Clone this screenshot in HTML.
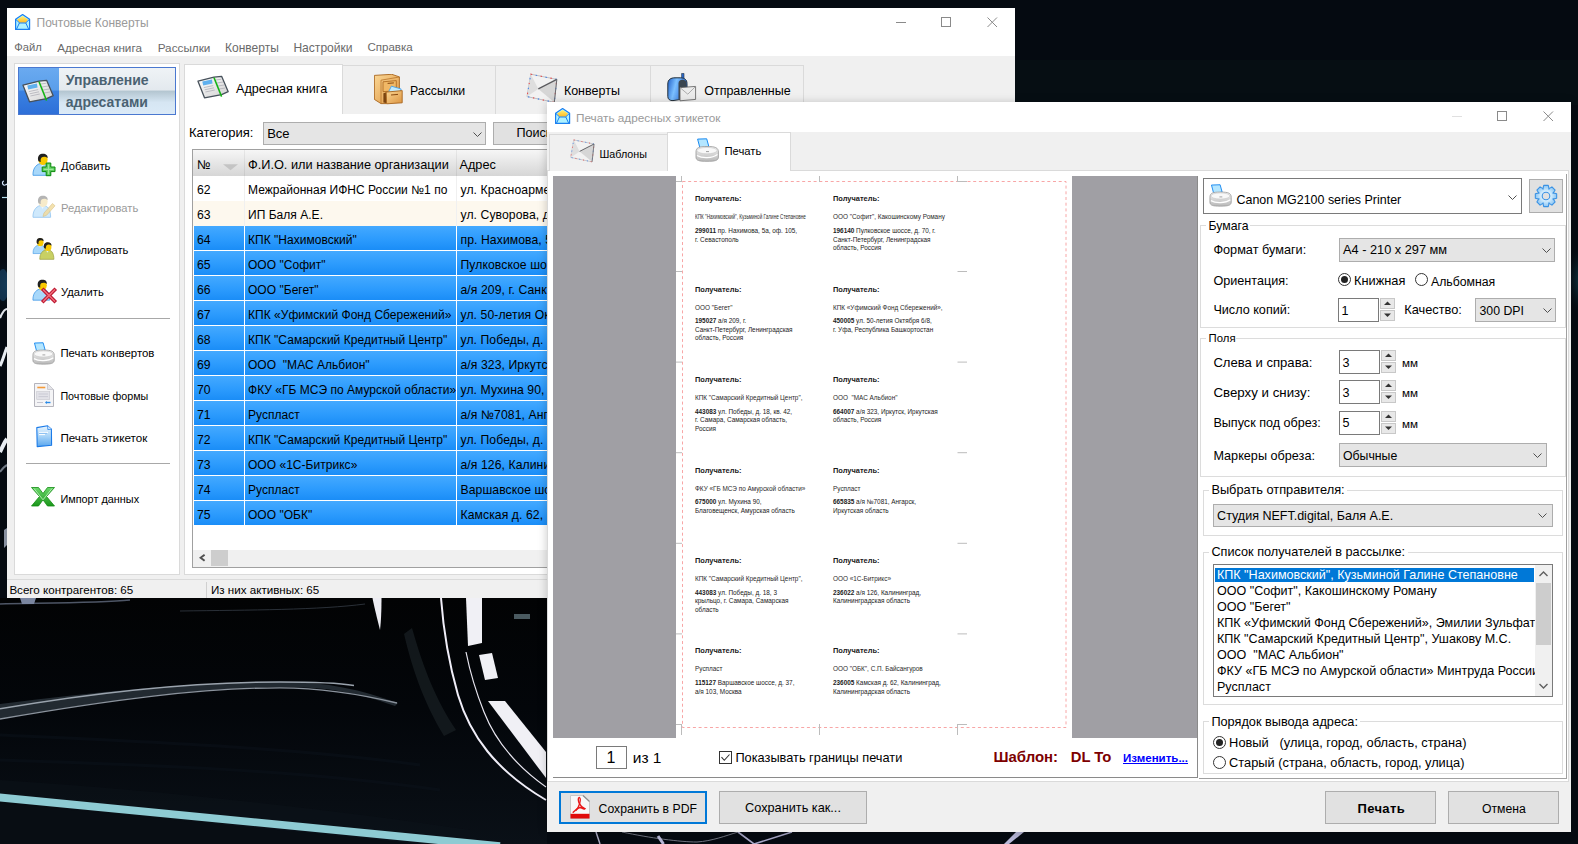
<!DOCTYPE html>
<html><head><meta charset="utf-8">
<style>
*{margin:0;padding:0;box-sizing:border-box}
html,body{width:1578px;height:844px;overflow:hidden}
body{background:#04090f;font-family:"Liberation Sans",sans-serif;font-size:12px;color:#000;position:relative}
.a{position:absolute}
.t{position:absolute;white-space:pre;line-height:1}
.clip{position:absolute;overflow:hidden}
</style></head><body>

<svg class="a" style="left:0;top:0" width="1578" height="844">
<defs>
<radialGradient id="glow" cx="0.5" cy="0.5" r="0.5"><stop offset="0" stop-color="#1a6a80"/><stop offset="1" stop-color="#04090f" stop-opacity="0"/></radialGradient>
<radialGradient id="glow2" cx="0.5" cy="0.5" r="0.5"><stop offset="0" stop-color="#0c2a3a"/><stop offset="1" stop-color="#04090f" stop-opacity="0"/></radialGradient>
</defs>
<defs><linearGradient id="floor" x1="0" y1="0" x2="0" y2="1"><stop offset="0" stop-color="#020304"/><stop offset="0.45" stop-color="#03060a"/><stop offset="1" stop-color="#0a1017"/></linearGradient></defs><rect width="1578" height="844" fill="#050a11"/><rect x="1015" y="60" width="563" height="45" fill="#061016" opacity="0.6"/><rect x="0" y="598" width="547" height="246" fill="url(#floor)"/>

<ellipse cx="1590" cy="280" rx="28" ry="40" fill="url(#glow)"/>
<ellipse cx="8" cy="285" rx="20" ry="30" fill="url(#glow2)"/>
<g stroke="#0b121b" stroke-width="3" fill="none" opacity="0.5">
<path d="M0 760 C150 765 300 770 440 790"/>
<path d="M0 735 C150 742 300 748 420 765"/>
<path d="M60 820 C200 822 330 830 420 844"/>
</g>
<path d="M0 704 C110 690 200 682 280 682 C320 682 350 686 398 703 L395 706 C350 690 320 687 280 687 C200 688 110 700 0 719 Z" fill="#222a31"/>
<path d="M0 708.8 C110 690 200 682 280 682 C320 682 345 684 354 685.5" stroke="#9aa3ad" stroke-width="1.6" fill="none"/>
<path d="M0 719 C110 700 200 688 280 687.8 C320 688 360 694 397 703" stroke="#8a929c" stroke-width="1.3" fill="none"/>
<path d="M0 780 C150 790 300 805 470 830 L470 844 L0 797 Z" fill="#0d141b" opacity="0.45"/><path d="M0 803 L470 849 L470 844 L0 844 Z" fill="#080d13"/><path d="M-2 797.3 L500 846.1" stroke="#8ecbd3" stroke-width="7.8"/>
<path d="M0 604 C40 603 100 603 130 600" stroke="#4e5666" stroke-width="1.5" fill="none"/>
<path d="M20 598 L36 598 L34 604 L22 604 Z" fill="#7a86a0"/>
<path d="M180 611 C250 610 320 610 365 604" stroke="#2a3038" stroke-width="1" fill="none"/>
<path d="M372.5 598 L381.5 598 C381.5 610 381 622 380 630 C377 618 374 606 372.5 598 Z" fill="#ececf2"/>
<path d="M441 598 C443 625 448 660 458 695 C470 735 495 770 546 800" stroke="#f0eef8" stroke-width="2" fill="none"/>
<path d="M466 652 C470 672 476 692 484 712 C495 740 515 765 546 787" stroke="#e8e6f0" stroke-width="1.2" fill="none"/>
<path d="M412 628 C424 670 436 700 456 730 L444 736 C426 706 414 676 404 634 Z" fill="#161d21" opacity="0.8"/>
<path d="M466 598 L482 598 L482 643 L468 646 Z" fill="#f0f0f5"/>
<path d="M479 655 L492 653 L498 678 L485 680 Z" fill="#f0f0f5"/>
<path d="M488 701 L505 701 L546 752 L546 778 Z" fill="#f0f0f5"/>
<path d="M514 614 H530 V619 H514 Z" fill="#4a5a60"/>
<path d="M596 832 L600 844" stroke="#a8a8c0" stroke-width="1.5" fill="none"/>
<path d="M622 832 C650 838 680 842 697 842 C712 841 725 836 738 832" stroke="#707480" stroke-width="1" fill="none"/>
<path d="M658 836 L663.5 844" stroke="#b8b8d8" stroke-width="3" fill="none"/>
<path d="M738 832 L754 844 L792 832" stroke="#a8a8c8" stroke-width="1.6" fill="none"/>
<path d="M1016 832 L1024 832 L1009 844 L1004 844 Z" fill="#b8b8d8"/>
<path d="M2 197.5 H7" stroke="#b8e0f0" stroke-width="1.2"/>
<path d="M4 181 C2.5 181 2 183 3 184.5 C4 185.5 6 185 7 184" stroke="#d8e8ff" stroke-width="1.2" fill="none"/>
<ellipse cx="3" cy="285" rx="6" ry="16" fill="#1c4a70" opacity="0.6"/>
<path d="M0 318 C3 311 5 309 7 309" stroke="#e0e4ea" stroke-width="2.2" fill="none"/>
<path d="M0 366 C3 360 5 352 7 347" stroke="#e8ecf2" stroke-width="3" fill="none"/>
<path d="M0 452 C3 446 5 441 7 439" stroke="#e8ecf2" stroke-width="4" fill="none"/>
<path d="M0 472 C3 468 5 466 7 465" stroke="#707884" stroke-width="2" fill="none"/>
<path d="M4 530 L7 528 L7 545 L4 548 Z" fill="#8890a0"/>
</svg>

<div class="a" style="left:7px;top:8px;width:1008px;height:590px;background:#f0f0f0"></div>
<div class="a" style="left:7px;top:8px;width:1008px;height:48px;background:#fff"></div>
<svg class="a" style="left:15px;top:14px" width="16" height="17" viewBox="0 0 16 17">
<defs><linearGradient id="appy" x1="0" y1="0" x2="0" y2="1"><stop offset="0" stop-color="#fff27a"/><stop offset="1" stop-color="#ffb820"/></linearGradient></defs>
<path d="M0.6 5.2 L7.6 0.6 L14.6 5.2 V15.4 H0.6 Z" fill="#aef2ff" stroke="#1a7ff0" stroke-width="1.2" stroke-linejoin="round"/>
<path d="M2.2 5.6 L7.6 1.9 L13 5.6 L11 8.8 H4.2 Z" fill="url(#appy)"/>
<path d="M1 5.6 L4.6 9 M14.2 5.6 L10.6 9 M4.4 9 L1.6 15 M10.8 9 L13.6 15 M4.4 9 H10.8" stroke="#1a7ff0" stroke-width="1" fill="none"/>
</svg>
<div class="t" style="left:36.50px;top:16.54px;font-size:12px;color:#9a9a9a;font-weight:normal;">Почтовые Конверты</div>
<div class="a" style="left:896px;top:22px;width:10px;height:1px;background:#8a8a8a"></div>
<div class="a" style="left:941px;top:17px;width:10px;height:10px;border:1px solid #8a8a8a"></div>
<svg class="a" style="left:987px;top:17px" width="11" height="11" viewBox="0 0 11 11"><path d="M0.5 0.5 L10 10 M10 0.5 L0.5 10" stroke="#8a8a8a" stroke-width="1"/></svg>
<div class="t" style="left:14.30px;top:42.29px;font-size:11.23px;color:#6a6a6a;font-weight:normal;">Файл</div>
<div class="t" style="left:57.30px;top:41.90px;font-size:11.69px;color:#6a6a6a;font-weight:normal;">Адресная книга</div>
<div class="t" style="left:157.70px;top:42.46px;font-size:11.74px;color:#6a6a6a;font-weight:normal;">Рассылки</div>
<div class="t" style="left:225.10px;top:41.65px;font-size:11.99px;color:#6a6a6a;font-weight:normal;">Конверты</div>
<div class="t" style="left:293.40px;top:41.57px;font-size:12.09px;color:#6a6a6a;font-weight:normal;">Настройки</div>
<div class="t" style="left:367.40px;top:42.02px;font-size:11.55px;color:#6a6a6a;font-weight:normal;">Справка</div>
<div class="a" style="left:14px;top:63px;width:166px;height:512px;background:#fff;border:1px solid #dadada"></div>
<div class="a" style="left:18px;top:67px;width:158px;height:48px;border:1px solid #4a78d0;background:linear-gradient(#eff3f6 0%,#e3e9ee 48%,#b3c5d0 50%,#d6e6f3 75%,#dbeaf7 100%)"></div>
<div class="a" style="left:19px;top:68px;width:40px;height:46px;background:linear-gradient(#6aaaf0 0%,#5a9eea 48%,#3a82e2 50%,#2e6fd8 100%)"></div>
<svg class="a" style="left:22px;top:79px" width="33" height="25" viewBox="0 0 33 25"><g transform="scale(1.0)">
<defs><linearGradient id="bkp" x1="0" y1="0" x2="1" y2="1"><stop offset="0" stop-color="#ffffff"/><stop offset="1" stop-color="#d0d0d0"/></linearGradient></defs>
<path d="M1 6.2 L17 2.2 L24.6 1.3 L31.2 16.7 L24.6 19.6 L7.5 22.8 Z" fill="url(#bkp)" stroke="#46505a" stroke-width="1.3" stroke-linejoin="round"/>
<path d="M5.3 6.4 L14.9 4.6 L15.6 8.4 L6.2 10.4 Z" fill="#5fb0ee"/>
<path d="M6.8 12.6 L16.2 10.6 M7.6 14.8 L17 12.8 M8.4 17 L17.8 15 M19 5 L24.4 4.2 M20 8 L26 7 M21 11 L27.2 10 M22 14 L28.2 13" stroke="#b0b0b8" stroke-width="0.8"/>
<path d="M17 2.6 L24.6 21.6" stroke="#14b414" stroke-width="1.5"/>
</g></svg>
<div class="t" style="left:65.80px;top:72.65px;font-size:14px;color:#4a6272;font-weight:bold;">Управление</div>
<div class="t" style="left:65.80px;top:94.95px;font-size:14px;color:#4a6272;font-weight:bold;">адресатами</div>
<svg class="a" style="left:32px;top:153px" width="26" height="25" viewBox="0 0 26 25"><g transform="translate(0,0) scale(1.0)">
<path d="M1 22.3 C0.8 16 3.5 12 8 10.6 L13 10.6 C16.5 12 18.6 15.5 18.6 22.3 Z" fill="#a8d8fa" stroke="#4a9ee8" stroke-width="0.9"/>
<path d="M8.6 10.6 L10.5 14 L12.5 10.6 Z" fill="#e0f2ff"/>
<ellipse cx="11" cy="6.6" rx="4.6" ry="5.4" fill="#f8c800"/>
<path d="M6.2 7.6 C5.2 2.6 8 0.8 11 0.8 C14 0.8 16 2.4 15.6 5.2 C14 3.6 11 3.4 9.6 4.6 C8.6 5.6 8.4 7.4 8.8 9 C7.6 9 6.6 8.6 6.2 7.6 Z" fill="#202020"/>
</g><path d="M14.2 10 H18.8 V14 H23 V18.6 H18.8 V22.7 H14.2 V18.6 H10.2 V14 H14.2 Z" fill="#5ccc5c" stroke="#0a8a0a" stroke-width="1"/><path d="M16.5 11.5 V21.2 M11.7 16.3 H21.5" stroke="#9ae89a" stroke-width="1.2"/></svg>
<div class="t" style="left:61.00px;top:160.72px;font-size:11.2px;color:#000;font-weight:normal;">Добавить</div>
<svg class="a" style="left:32px;top:195px" width="26" height="25" viewBox="0 0 26 25"><g opacity="0.55"><g transform="translate(0,0) scale(1.0)">
<path d="M1 22.3 C0.8 16 3.5 12 8 10.6 L13 10.6 C16.5 12 18.6 15.5 18.6 22.3 Z" fill="#a8d8fa" stroke="#4a9ee8" stroke-width="0.9"/>
<path d="M8.6 10.6 L10.5 14 L12.5 10.6 Z" fill="#e0f2ff"/>
<ellipse cx="11" cy="6.6" rx="4.6" ry="5.4" fill="#f2dca0"/>
<path d="M6.2 7.6 C5.2 2.6 8 0.8 11 0.8 C14 0.8 16 2.4 15.6 5.2 C14 3.6 11 3.4 9.6 4.6 C8.6 5.6 8.4 7.4 8.8 9 C7.6 9 6.6 8.6 6.2 7.6 Z" fill="#777"/>
</g></g><path d="M11 21.5 L12 18 L20.5 8.5 L23 10.8 L14.5 20.3 Z" fill="#f2dca0" stroke="#d8c080" stroke-width="0.7" opacity="0.85"/></svg>
<div class="t" style="left:61.00px;top:202.72px;font-size:11.2px;color:#9a9a9a;font-weight:normal;">Редактировать</div>
<svg class="a" style="left:32px;top:237px" width="26" height="25" viewBox="0 0 26 25"><g transform="translate(0.3,0.5) scale(0.72)">
<path d="M1 22.3 C0.8 16 3.5 12 8 10.6 L13 10.6 C16.5 12 18.6 15.5 18.6 22.3 Z" fill="#a8d8fa" stroke="#4a9ee8" stroke-width="0.9"/>
<path d="M8.6 10.6 L10.5 14 L12.5 10.6 Z" fill="#e0f2ff"/>
<ellipse cx="11" cy="6.6" rx="4.6" ry="5.4" fill="#f8c800"/>
<path d="M6.2 7.6 C5.2 2.6 8 0.8 11 0.8 C14 0.8 16 2.4 15.6 5.2 C14 3.6 11 3.4 9.6 4.6 C8.6 5.6 8.4 7.4 8.8 9 C7.6 9 6.6 8.6 6.2 7.6 Z" fill="#202020"/>
</g><g transform="translate(7,4.5) scale(0.8)">
<path d="M1 22.3 C0.8 16 3.5 12 8 10.6 L13 10.6 C16.5 12 18.6 15.5 18.6 22.3 Z" fill="#c8d064" stroke="#9aa040" stroke-width="0.9"/>
<path d="M8.6 10.6 L10.5 14 L12.5 10.6 Z" fill="#e0f2ff"/>
<ellipse cx="11" cy="6.6" rx="4.6" ry="5.4" fill="#f8c800"/>
<path d="M6.2 7.6 C5.2 2.6 8 0.8 11 0.8 C14 0.8 16 2.4 15.6 5.2 C14 3.6 11 3.4 9.6 4.6 C8.6 5.6 8.4 7.4 8.8 9 C7.6 9 6.6 8.6 6.2 7.6 Z" fill="#202020"/>
</g></svg>
<div class="t" style="left:61.00px;top:244.72px;font-size:11.2px;color:#000;font-weight:normal;">Дублировать</div>
<svg class="a" style="left:32px;top:279px" width="26" height="25" viewBox="0 0 26 25"><g transform="translate(0,0) scale(0.95)">
<path d="M1 22.3 C0.8 16 3.5 12 8 10.6 L13 10.6 C16.5 12 18.6 15.5 18.6 22.3 Z" fill="#a8d8fa" stroke="#4a9ee8" stroke-width="0.9"/>
<path d="M8.6 10.6 L10.5 14 L12.5 10.6 Z" fill="#e0f2ff"/>
<ellipse cx="11" cy="6.6" rx="4.6" ry="5.4" fill="#f8c800"/>
<path d="M6.2 7.6 C5.2 2.6 8 0.8 11 0.8 C14 0.8 16 2.4 15.6 5.2 C14 3.6 11 3.4 9.6 4.6 C8.6 5.6 8.4 7.4 8.8 9 C7.6 9 6.6 8.6 6.2 7.6 Z" fill="#202020"/>
</g><path d="M11.5 11 L22.5 22 M22.5 11 L11.5 22" stroke="#b8102a" stroke-width="3.6" stroke-linecap="square"/><path d="M11.5 11 L22.5 22 M22.5 11 L11.5 22" stroke="#f06a78" stroke-width="1.6" stroke-linecap="square"/></svg>
<div class="t" style="left:61.00px;top:286.72px;font-size:11.2px;color:#000;font-weight:normal;">Удалить</div>
<div class="a" style="left:26px;top:318px;width:144px;height:1px;background:#a8a8a8"></div>
<svg class="a" style="left:32px;top:342px" width="24" height="24" viewBox="0 0 24 24"><g transform="scale(0.95)">
<defs><linearGradient id="prb" x1="0" y1="0" x2="0" y2="1"><stop offset="0" stop-color="#f6f6f6"/><stop offset="1" stop-color="#b8b8b8"/></linearGradient></defs>
<path d="M2.6 1.1 L11.7 0.8 L13.8 8.4 L5 10.2 Z" fill="#b4e6ff" stroke="#1a8af0" stroke-width="1"/>
<path d="M1 14 C1 9.5 4 8.5 12 8.5 C20 8.5 23.4 9.5 23.4 14 V19 C23.4 22.6 20 23.3 12 23.3 C4 23.3 1 22.6 1 19 Z" fill="url(#prb)" stroke="#a0a0a0" stroke-width="0.9"/>
<ellipse cx="12" cy="12.6" rx="10" ry="3.2" fill="#f8f8f8" stroke="#c8c8c8" stroke-width="0.6"/>
<path d="M2 17.5 C7 20.5 17 20.5 22.5 16.5" stroke="#ffffff" stroke-width="1.3" fill="none"/>
<path d="M11 13.6 H14" stroke="#888" stroke-width="0.8"/>
</g></svg>
<div class="t" style="left:60.40px;top:347.85px;font-size:11.4px;color:#000;font-weight:normal;">Печать конвертов</div>
<svg class="a" style="left:33.5px;top:382.8px" width="21" height="25" viewBox="0 0 21 25">
<path d="M0.5 0.5 H13.5 L19.5 6.5 V23.5 H0.5 Z" fill="#f4f4f6" stroke="#b4b4bc" stroke-width="1"/>
<path d="M13.5 0.5 V6.5 H19.5" fill="#e4e4e8" stroke="#c4c4cc" stroke-width="0.8"/>
<path d="M3.3 4.5 H11.3" stroke="#f39a3a" stroke-width="1.6"/>
<rect x="2.7" y="8.6" width="13" height="8" fill="#e2e2e8" stroke="#c8c8d0" stroke-width="0.6"/>
<path d="M4.5 11 H14 M4.5 13.6 H14" stroke="#c0c0cc" stroke-width="0.7"/>
<path d="M3 19.5 H9" stroke="#b8b8c4" stroke-width="0.8"/>
<path d="M11.5 19.5 H16.5" stroke="#2a8ae6" stroke-width="1.4"/>
<path d="M11.2 19.5 L13 18 V21 Z" fill="#2a8ae6"/>
</svg>
<div class="t" style="left:60.40px;top:390.52px;font-size:10.73px;color:#000;font-weight:normal;">Почтовые формы</div>
<svg class="a" style="left:35.6px;top:425.2px" width="18" height="23" viewBox="0 0 18 23">
<defs><linearGradient id="lbg" x1="0" y1="0" x2="0" y2="1"><stop offset="0" stop-color="#eaf6ff"/><stop offset="0.5" stop-color="#a8d4f8"/><stop offset="1" stop-color="#5aa6ee"/></linearGradient></defs>
<path d="M0.8 2.6 L11.6 0.8 L15.4 4.2 L15.6 20.2 L1.2 21.6 Z" fill="url(#lbg)" stroke="#1a7ae8" stroke-width="1.1" stroke-linejoin="round"/>
<path d="M11.6 0.8 L11.8 4.6 L15.4 4.2" fill="#d8ecff" stroke="#1a7ae8" stroke-width="0.7"/>
<path d="M3 7.4 H12 M3 9.6 H9" stroke="#ffffff" stroke-width="1"/>
<path d="M3 8.4 H11" stroke="#5aa0e8" stroke-width="0.5"/>
</svg>
<div class="t" style="left:60.40px;top:432.16px;font-size:11.63px;color:#000;font-weight:normal;">Печать этикеток</div>
<div class="a" style="left:26px;top:463px;width:144px;height:1px;background:#a8a8a8"></div>
<svg class="a" style="left:31px;top:487px" width="25" height="20" viewBox="0 0 25 20">
<defs><linearGradient id="xlg" x1="0" y1="0" x2="0" y2="1"><stop offset="0" stop-color="#6ad86a"/><stop offset="1" stop-color="#1a961a"/></linearGradient></defs>
<path d="M0.5 0.5 H7.5 L12 6.5 L16.5 0.5 H23.5 L15.5 9.5 L23.5 19 H16.5 L12 12.8 L7.5 19 H0.5 L8.5 9.5 Z" fill="url(#xlg)" stroke="#138a13" stroke-width="0.8"/>
<path d="M3 1.5 L12 12.8 M21 1.5 L12 12.8" stroke="#b8f0b8" stroke-width="0.9" fill="none"/>
</svg>
<div class="t" style="left:60.40px;top:493.58px;font-size:10.89px;color:#000;font-weight:normal;">Импорт данных</div>
<div class="a" style="left:184px;top:113px;width:831px;height:462px;background:#fff;border:1px solid #dadada"></div>
<div class="a" style="left:342px;top:65px;width:154px;height:49px;background:#f0f0f0;border:1px solid #dadada;border-bottom:none"></div>
<div class="a" style="left:495px;top:65px;width:156px;height:49px;background:#f0f0f0;border:1px solid #dadada;border-bottom:none"></div>
<div class="a" style="left:650px;top:65px;width:154px;height:49px;background:#f0f0f0;border:1px solid #dadada;border-bottom:none"></div>
<div class="a" style="left:184px;top:64px;width:159px;height:50px;background:#fff;border:1px solid #dadada;border-bottom:none"></div>
<svg class="a" style="left:197px;top:75px" width="33" height="25" viewBox="0 0 33 25"><g transform="scale(1.0)">
<defs><linearGradient id="bkp" x1="0" y1="0" x2="1" y2="1"><stop offset="0" stop-color="#ffffff"/><stop offset="1" stop-color="#d0d0d0"/></linearGradient></defs>
<path d="M1 6.2 L17 2.2 L24.6 1.3 L31.2 16.7 L24.6 19.6 L7.5 22.8 Z" fill="url(#bkp)" stroke="#46505a" stroke-width="1.3" stroke-linejoin="round"/>
<path d="M5.3 6.4 L14.9 4.6 L15.6 8.4 L6.2 10.4 Z" fill="#5fb0ee"/>
<path d="M6.8 12.6 L16.2 10.6 M7.6 14.8 L17 12.8 M8.4 17 L17.8 15 M19 5 L24.4 4.2 M20 8 L26 7 M21 11 L27.2 10 M22 14 L28.2 13" stroke="#b0b0b8" stroke-width="0.8"/>
<path d="M17 2.6 L24.6 21.6" stroke="#14b414" stroke-width="1.5"/>
</g></svg>
<div class="t" style="left:236.00px;top:82.63px;font-size:12.6px;color:#000;font-weight:normal;">Адресная книга</div>
<svg class="a" style="left:373.5px;top:73.8px" width="29" height="31" viewBox="0 0 29 31">
<defs><linearGradient id="cab" x1="0" y1="0" x2="1" y2="1"><stop offset="0" stop-color="#fbd795"/><stop offset="1" stop-color="#dc9440"/></linearGradient></defs>
<path d="M0.4 1.4 L17.8 0.3 L25.4 2.9 L25.4 18 L12.2 18 L12.2 29.6 L7 29.6 L0.4 25.4 Z" fill="url(#cab)" stroke="#a8641c" stroke-width="0.9" stroke-linejoin="round"/>
<path d="M7 6.2 L25.4 3 M7 6.2 V29.6" stroke="#b8742a" stroke-width="0.8" fill="none"/>
<path d="M9 7.8 L22.3 6.6 L22.3 17 L9 17.6 Z" fill="#f0b866" stroke="#a8641c" stroke-width="0.8"/>
<path d="M13.6 9.4 L19.9 8.9" stroke="#8a4a10" stroke-width="1"/>
<path d="M9.4 19.2 L12.2 18.4 L12.2 29 L9.4 28.4 Z" fill="#7a4410"/>
<path d="M14.3 18.4 L17.4 12.2 L27.2 15 L26.1 17.6 Z" fill="#bfeaff" stroke="#3a9ae8" stroke-width="0.8"/>
<path d="M12.2 18.1 L28.2 16.6 L28.2 28.8 L12.6 29.8 Z" fill="url(#cab)" stroke="#a8641c" stroke-width="0.9" stroke-linejoin="round"/>
<path d="M17 21 L24 20.4" stroke="#8a4a10" stroke-width="1"/>
</svg>
<div class="t" style="left:410.00px;top:84.89px;font-size:12.3px;color:#000;font-weight:normal;">Рассылки</div>
<svg class="a" style="left:526px;top:72.5px" width="33" height="33" viewBox="0 0 33 33"><g transform="scale(1.0)">
<path d="M4.8 1.2 L30.8 6.4 L28.3 29.3 L1 23.6 Z" fill="#f2f2f2" stroke="#b8b8bc" stroke-width="0.9"/>
<path d="M4.8 1.2 L12.3 15.9 L1 23.6 Z" fill="#dedede"/>
<path d="M30.8 6.4 L12.3 15.9 L28.3 29.3 Z" fill="#d6d6d6"/>
<path d="M4.8 1.2 L30.8 6.4 L28.3 29.3 L1 23.6 Z" fill="none" stroke="#e85050" stroke-width="1.1" stroke-dasharray="1.4 8.6"/>
<path d="M4.8 1.2 L30.8 6.4 L28.3 29.3 L1 23.6 Z" fill="none" stroke="#4a86e8" stroke-width="1.1" stroke-dasharray="1.4 8.6" stroke-dashoffset="5"/>
<path d="M30.8 6.4 L12.3 15.9" fill="none" stroke="#5a5a5e" stroke-width="1.2"/>
<path d="M28.3 29.3 L30.8 6.4" fill="none" stroke="#6a6a6e" stroke-width="1"/>
</g></svg>
<div class="t" style="left:563.90px;top:84.82px;font-size:12.5px;color:#000;font-weight:normal;">Конверты</div>
<svg class="a" style="left:667px;top:73px" width="30" height="30" viewBox="0 0 30 30">
<defs><linearGradient id="mbx" x1="0" y1="0" x2="1" y2="0.3"><stop offset="0" stop-color="#1f5fc8"/><stop offset="0.45" stop-color="#7cc0ff"/><stop offset="1" stop-color="#2a6ad8"/></linearGradient></defs>
<path d="M14.6 0.4 H17 V9.5 H14.6 Z" fill="#2a6ad0" stroke="#24303a" stroke-width="0.6"/>
<path d="M0.8 11 C0.8 6.5 3.8 4.8 8 4.8 H13.5 C17.5 4.8 20 6.8 20 10.5 V25.5 L6 27.6 C2.6 27.8 0.8 26 0.8 23.5 Z" fill="url(#mbx)" stroke="#24303a" stroke-width="1"/>
<path d="M11.5 10.5 C11.5 8 13 6.8 15.5 6.8 C18 6.8 19.5 8.2 19.5 10.5 V25 L11.5 26 Z" fill="#3a4650"/>
<path d="M13 14.6 L28.6 13.4 L28.6 26.4 L13 27.8 Z" fill="#ececec" stroke="#5a5a5a" stroke-width="0.8"/>
<path d="M13 14.6 L20.8 21.2 L28.6 13.4" fill="none" stroke="#9a9a9a" stroke-width="0.8"/>
</svg>
<div class="t" style="left:704.20px;top:84.82px;font-size:12.5px;color:#000;font-weight:normal;">Отправленные</div>
<div class="t" style="left:189.00px;top:126.00px;font-size:13.0px;color:#000;font-weight:normal;">Категория:</div>
<div class="a" style="left:263px;top:122px;width:223px;height:23px;background:#e5e5e5;border:1px solid #adadad"></div>
<div class="t" style="left:267.20px;top:126.90px;font-size:13px;color:#000;font-weight:normal;">Все</div>
<svg class="a" style="left:472.5px;top:131.5px" width="9" height="6" viewBox="0 0 9 6"><path d="M0.5 0.5 L4.5 4.5 L8.5 0.5" fill="none" stroke="#505050" stroke-width="1"/></svg>
<div class="a" style="left:493px;top:122px;width:80px;height:23px;background:#e1e1e1;border:1px solid #adadad"></div>
<div class="t" style="left:516.40px;top:127.21px;font-size:12.63px;color:#000;font-weight:normal;">Поиск</div>
<div class="a" style="left:192px;top:149px;width:360px;height:419px;background:#fff;border:1px solid #a0a0a0"></div>
<div class="a" style="left:193px;top:150px;width:360px;height:26px;background:linear-gradient(#f6f6f6,#d6d6d6)"></div>
<div class="a" style="left:244px;top:150px;width:1px;height:26px;background:linear-gradient(#e8e8e8,#c8c8c8)"></div>
<div class="a" style="left:456px;top:150px;width:1px;height:26px;background:linear-gradient(#e8e8e8,#c8c8c8)"></div>
<div class="t" style="left:197.00px;top:158.93px;font-size:12.6px;color:#000;font-weight:normal;">№</div>
<svg class="a" style="left:223px;top:164px" width="16" height="7" viewBox="0 0 16 7"><path d="M0 0.3 H15 L7.5 6.2 Z" fill="#c4c4c4"/></svg>
<div class="t" style="left:248.00px;top:158.80px;font-size:12.76px;color:#000;font-weight:normal;">Ф.И.О. или название организации</div>
<div class="t" style="left:459.50px;top:158.85px;font-size:12.7px;color:#000;font-weight:normal;">Адрес</div>
<div class="a" style="left:193px;top:176px;width:360px;height:25px;background:#fff"></div>
<div class="a" style="left:244px;top:176px;width:1px;height:25px;background:#f0f0f0"></div>
<div class="a" style="left:456px;top:176px;width:1px;height:25px;background:#f0f0f0"></div>
<div class="t" style="left:197.00px;top:183.97px;font-size:12.2px;color:#000;font-weight:normal;">62</div>
<div class="clip" style="left:245px;top:176px;width:211px;height:25px">
<div class="t" style="left:3.00px;top:8.14px;font-size:12.0px;color:#000;font-weight:normal;letter-spacing:0.03px">Межрайонная ИФНС России №1 по</div>
</div>
<div class="clip" style="left:457px;top:176px;width:100px;height:25px">
<div class="t" style="left:3.50px;top:7.97px;font-size:12.2px;color:#000;font-weight:normal;letter-spacing:0.08px">ул. Красноармейская</div>
</div>
<div class="a" style="left:193px;top:201px;width:360px;height:25px;background:#fdf8ee"></div>
<div class="a" style="left:244px;top:201px;width:1px;height:25px;background:#f0f0f0"></div>
<div class="a" style="left:456px;top:201px;width:1px;height:25px;background:#f0f0f0"></div>
<div class="t" style="left:197.00px;top:208.97px;font-size:12.2px;color:#000;font-weight:normal;">63</div>
<div class="clip" style="left:245px;top:201px;width:211px;height:25px">
<div class="t" style="left:3.00px;top:8.14px;font-size:12.0px;color:#000;font-weight:normal;letter-spacing:0.03px">ИП Баля А.Е.</div>
</div>
<div class="clip" style="left:457px;top:201px;width:100px;height:25px">
<div class="t" style="left:3.50px;top:7.97px;font-size:12.2px;color:#000;font-weight:normal;letter-spacing:0.08px">ул. Суворова, д. 1</div>
</div>
<div class="a" style="left:194px;top:226px;width:50px;height:24px;background:linear-gradient(#44a9ff,#2c9bfd 55%,#1a8df7)"></div>
<div class="a" style="left:245px;top:226px;width:211px;height:24px;background:linear-gradient(#44a9ff,#2c9bfd 55%,#1a8df7)"></div>
<div class="a" style="left:457px;top:226px;width:100px;height:24px;background:linear-gradient(#44a9ff,#2c9bfd 55%,#1a8df7)"></div>
<div class="t" style="left:197.00px;top:233.97px;font-size:12.2px;color:#000;font-weight:normal;">64</div>
<div class="clip" style="left:245px;top:226px;width:211px;height:25px">
<div class="t" style="left:3.00px;top:8.14px;font-size:12.0px;color:#000;font-weight:normal;letter-spacing:0.03px">КПК &quot;Нахимовский&quot;</div>
</div>
<div class="clip" style="left:457px;top:226px;width:100px;height:25px">
<div class="t" style="left:3.50px;top:7.97px;font-size:12.2px;color:#000;font-weight:normal;letter-spacing:0.08px">пр. Нахимова, 5а</div>
</div>
<div class="a" style="left:194px;top:251px;width:50px;height:24px;background:linear-gradient(#44a9ff,#2c9bfd 55%,#1a8df7)"></div>
<div class="a" style="left:245px;top:251px;width:211px;height:24px;background:linear-gradient(#44a9ff,#2c9bfd 55%,#1a8df7)"></div>
<div class="a" style="left:457px;top:251px;width:100px;height:24px;background:linear-gradient(#44a9ff,#2c9bfd 55%,#1a8df7)"></div>
<div class="t" style="left:197.00px;top:258.97px;font-size:12.2px;color:#000;font-weight:normal;">65</div>
<div class="clip" style="left:245px;top:251px;width:211px;height:25px">
<div class="t" style="left:3.00px;top:8.14px;font-size:12.0px;color:#000;font-weight:normal;letter-spacing:0.03px">ООО &quot;Софит&quot;</div>
</div>
<div class="clip" style="left:457px;top:251px;width:100px;height:25px">
<div class="t" style="left:3.50px;top:7.97px;font-size:12.2px;color:#000;font-weight:normal;letter-spacing:0.08px">Пулковское шоссе</div>
</div>
<div class="a" style="left:194px;top:276px;width:50px;height:24px;background:linear-gradient(#44a9ff,#2c9bfd 55%,#1a8df7)"></div>
<div class="a" style="left:245px;top:276px;width:211px;height:24px;background:linear-gradient(#44a9ff,#2c9bfd 55%,#1a8df7)"></div>
<div class="a" style="left:457px;top:276px;width:100px;height:24px;background:linear-gradient(#44a9ff,#2c9bfd 55%,#1a8df7)"></div>
<div class="t" style="left:197.00px;top:283.97px;font-size:12.2px;color:#000;font-weight:normal;">66</div>
<div class="clip" style="left:245px;top:276px;width:211px;height:25px">
<div class="t" style="left:3.00px;top:8.14px;font-size:12.0px;color:#000;font-weight:normal;letter-spacing:0.03px">ООО &quot;Бегет&quot;</div>
</div>
<div class="clip" style="left:457px;top:276px;width:100px;height:25px">
<div class="t" style="left:3.50px;top:7.97px;font-size:12.2px;color:#000;font-weight:normal;letter-spacing:0.08px">а/я 209, г. Санкт</div>
</div>
<div class="a" style="left:194px;top:301px;width:50px;height:24px;background:linear-gradient(#44a9ff,#2c9bfd 55%,#1a8df7)"></div>
<div class="a" style="left:245px;top:301px;width:211px;height:24px;background:linear-gradient(#44a9ff,#2c9bfd 55%,#1a8df7)"></div>
<div class="a" style="left:457px;top:301px;width:100px;height:24px;background:linear-gradient(#44a9ff,#2c9bfd 55%,#1a8df7)"></div>
<div class="t" style="left:197.00px;top:308.97px;font-size:12.2px;color:#000;font-weight:normal;">67</div>
<div class="clip" style="left:245px;top:301px;width:211px;height:25px">
<div class="t" style="left:3.00px;top:8.14px;font-size:12.0px;color:#000;font-weight:normal;letter-spacing:0.03px">КПК «Уфимский Фонд Сбережений»</div>
</div>
<div class="clip" style="left:457px;top:301px;width:100px;height:25px">
<div class="t" style="left:3.50px;top:7.97px;font-size:12.2px;color:#000;font-weight:normal;letter-spacing:0.08px">ул. 50-летия Октября</div>
</div>
<div class="a" style="left:194px;top:326px;width:50px;height:24px;background:linear-gradient(#44a9ff,#2c9bfd 55%,#1a8df7)"></div>
<div class="a" style="left:245px;top:326px;width:211px;height:24px;background:linear-gradient(#44a9ff,#2c9bfd 55%,#1a8df7)"></div>
<div class="a" style="left:457px;top:326px;width:100px;height:24px;background:linear-gradient(#44a9ff,#2c9bfd 55%,#1a8df7)"></div>
<div class="t" style="left:197.00px;top:333.97px;font-size:12.2px;color:#000;font-weight:normal;">68</div>
<div class="clip" style="left:245px;top:326px;width:211px;height:25px">
<div class="t" style="left:3.00px;top:8.14px;font-size:12.0px;color:#000;font-weight:normal;letter-spacing:0.03px">КПК &quot;Самарский Кредитный Центр&quot;</div>
</div>
<div class="clip" style="left:457px;top:326px;width:100px;height:25px">
<div class="t" style="left:3.50px;top:7.97px;font-size:12.2px;color:#000;font-weight:normal;letter-spacing:0.08px">ул. Победы, д. 18</div>
</div>
<div class="a" style="left:194px;top:351px;width:50px;height:24px;background:linear-gradient(#44a9ff,#2c9bfd 55%,#1a8df7)"></div>
<div class="a" style="left:245px;top:351px;width:211px;height:24px;background:linear-gradient(#44a9ff,#2c9bfd 55%,#1a8df7)"></div>
<div class="a" style="left:457px;top:351px;width:100px;height:24px;background:linear-gradient(#44a9ff,#2c9bfd 55%,#1a8df7)"></div>
<div class="t" style="left:197.00px;top:358.97px;font-size:12.2px;color:#000;font-weight:normal;">69</div>
<div class="clip" style="left:245px;top:351px;width:211px;height:25px">
<div class="t" style="left:3.00px;top:8.14px;font-size:12.0px;color:#000;font-weight:normal;letter-spacing:0.03px">ООО  &quot;МАС Альбион&quot;</div>
</div>
<div class="clip" style="left:457px;top:351px;width:100px;height:25px">
<div class="t" style="left:3.50px;top:7.97px;font-size:12.2px;color:#000;font-weight:normal;letter-spacing:0.08px">а/я 323, Иркутск</div>
</div>
<div class="a" style="left:194px;top:376px;width:50px;height:24px;background:linear-gradient(#44a9ff,#2c9bfd 55%,#1a8df7)"></div>
<div class="a" style="left:245px;top:376px;width:211px;height:24px;background:linear-gradient(#44a9ff,#2c9bfd 55%,#1a8df7)"></div>
<div class="a" style="left:457px;top:376px;width:100px;height:24px;background:linear-gradient(#44a9ff,#2c9bfd 55%,#1a8df7)"></div>
<div class="t" style="left:197.00px;top:383.97px;font-size:12.2px;color:#000;font-weight:normal;">70</div>
<div class="clip" style="left:245px;top:376px;width:211px;height:25px">
<div class="t" style="left:3.00px;top:8.14px;font-size:12.0px;color:#000;font-weight:normal;letter-spacing:0.03px">ФКУ «ГБ МСЭ по Амурской области»</div>
</div>
<div class="clip" style="left:457px;top:376px;width:100px;height:25px">
<div class="t" style="left:3.50px;top:7.97px;font-size:12.2px;color:#000;font-weight:normal;letter-spacing:0.08px">ул. Мухина 90, г.</div>
</div>
<div class="a" style="left:194px;top:401px;width:50px;height:24px;background:linear-gradient(#44a9ff,#2c9bfd 55%,#1a8df7)"></div>
<div class="a" style="left:245px;top:401px;width:211px;height:24px;background:linear-gradient(#44a9ff,#2c9bfd 55%,#1a8df7)"></div>
<div class="a" style="left:457px;top:401px;width:100px;height:24px;background:linear-gradient(#44a9ff,#2c9bfd 55%,#1a8df7)"></div>
<div class="t" style="left:197.00px;top:408.97px;font-size:12.2px;color:#000;font-weight:normal;">71</div>
<div class="clip" style="left:245px;top:401px;width:211px;height:25px">
<div class="t" style="left:3.00px;top:8.14px;font-size:12.0px;color:#000;font-weight:normal;letter-spacing:0.03px">Руспласт</div>
</div>
<div class="clip" style="left:457px;top:401px;width:100px;height:25px">
<div class="t" style="left:3.50px;top:7.97px;font-size:12.2px;color:#000;font-weight:normal;letter-spacing:0.08px">а/я №7081, Ангарск</div>
</div>
<div class="a" style="left:194px;top:426px;width:50px;height:24px;background:linear-gradient(#44a9ff,#2c9bfd 55%,#1a8df7)"></div>
<div class="a" style="left:245px;top:426px;width:211px;height:24px;background:linear-gradient(#44a9ff,#2c9bfd 55%,#1a8df7)"></div>
<div class="a" style="left:457px;top:426px;width:100px;height:24px;background:linear-gradient(#44a9ff,#2c9bfd 55%,#1a8df7)"></div>
<div class="t" style="left:197.00px;top:433.97px;font-size:12.2px;color:#000;font-weight:normal;">72</div>
<div class="clip" style="left:245px;top:426px;width:211px;height:25px">
<div class="t" style="left:3.00px;top:8.14px;font-size:12.0px;color:#000;font-weight:normal;letter-spacing:0.03px">КПК &quot;Самарский Кредитный Центр&quot;</div>
</div>
<div class="clip" style="left:457px;top:426px;width:100px;height:25px">
<div class="t" style="left:3.50px;top:7.97px;font-size:12.2px;color:#000;font-weight:normal;letter-spacing:0.08px">ул. Победы, д. 18</div>
</div>
<div class="a" style="left:194px;top:451px;width:50px;height:24px;background:linear-gradient(#44a9ff,#2c9bfd 55%,#1a8df7)"></div>
<div class="a" style="left:245px;top:451px;width:211px;height:24px;background:linear-gradient(#44a9ff,#2c9bfd 55%,#1a8df7)"></div>
<div class="a" style="left:457px;top:451px;width:100px;height:24px;background:linear-gradient(#44a9ff,#2c9bfd 55%,#1a8df7)"></div>
<div class="t" style="left:197.00px;top:458.97px;font-size:12.2px;color:#000;font-weight:normal;">73</div>
<div class="clip" style="left:245px;top:451px;width:211px;height:25px">
<div class="t" style="left:3.00px;top:8.14px;font-size:12.0px;color:#000;font-weight:normal;letter-spacing:0.03px">ООО «1С-Битрикс»</div>
</div>
<div class="clip" style="left:457px;top:451px;width:100px;height:25px">
<div class="t" style="left:3.50px;top:7.97px;font-size:12.2px;color:#000;font-weight:normal;letter-spacing:0.08px">а/я 126, Калининград</div>
</div>
<div class="a" style="left:194px;top:476px;width:50px;height:24px;background:linear-gradient(#44a9ff,#2c9bfd 55%,#1a8df7)"></div>
<div class="a" style="left:245px;top:476px;width:211px;height:24px;background:linear-gradient(#44a9ff,#2c9bfd 55%,#1a8df7)"></div>
<div class="a" style="left:457px;top:476px;width:100px;height:24px;background:linear-gradient(#44a9ff,#2c9bfd 55%,#1a8df7)"></div>
<div class="t" style="left:197.00px;top:483.97px;font-size:12.2px;color:#000;font-weight:normal;">74</div>
<div class="clip" style="left:245px;top:476px;width:211px;height:25px">
<div class="t" style="left:3.00px;top:8.14px;font-size:12.0px;color:#000;font-weight:normal;letter-spacing:0.03px">Руспласт</div>
</div>
<div class="clip" style="left:457px;top:476px;width:100px;height:25px">
<div class="t" style="left:3.50px;top:7.97px;font-size:12.2px;color:#000;font-weight:normal;letter-spacing:0.08px">Варшавское шоссе</div>
</div>
<div class="a" style="left:194px;top:501px;width:50px;height:24px;background:linear-gradient(#44a9ff,#2c9bfd 55%,#1a8df7)"></div>
<div class="a" style="left:245px;top:501px;width:211px;height:24px;background:linear-gradient(#44a9ff,#2c9bfd 55%,#1a8df7)"></div>
<div class="a" style="left:457px;top:501px;width:100px;height:24px;background:linear-gradient(#44a9ff,#2c9bfd 55%,#1a8df7)"></div>
<div class="t" style="left:197.00px;top:508.97px;font-size:12.2px;color:#000;font-weight:normal;">75</div>
<div class="clip" style="left:245px;top:501px;width:211px;height:25px">
<div class="t" style="left:3.00px;top:8.14px;font-size:12.0px;color:#000;font-weight:normal;letter-spacing:0.03px">ООО &quot;ОБК&quot;</div>
</div>
<div class="clip" style="left:457px;top:501px;width:100px;height:25px">
<div class="t" style="left:3.50px;top:7.97px;font-size:12.2px;color:#000;font-weight:normal;letter-spacing:0.08px">Камская д. 62, г.</div>
</div>
<div class="a" style="left:193px;top:550px;width:360px;height:17px;background:#f0f0f0"></div>
<svg class="a" style="left:199px;top:554px" width="7" height="8" viewBox="0 0 7 8"><path d="M5.6 0.8 L1.6 3.8 L5.6 6.8" fill="none" stroke="#505050" stroke-width="2"/></svg>
<div class="a" style="left:211px;top:550px;width:17px;height:16px;background:#cdcdcd"></div>
<div class="a" style="left:7px;top:579px;width:1008px;height:1px;background:#dadada"></div>
<div class="t" style="left:9.40px;top:584.38px;font-size:11.6px;color:#000;font-weight:normal;">Всего контрагентов: 65</div>
<div class="a" style="left:206px;top:582px;width:1px;height:16px;background:#d0d0d0"></div>
<div class="t" style="left:211.00px;top:584.38px;font-size:11.6px;color:#000;font-weight:normal;">Из них активных: 65</div>
<div class="a" style="left:547px;top:102px;width:1024px;height:730px;background:#f0f0f0;box-shadow:0 1px 9px rgba(0,0,0,0.22)"></div>
<div class="a" style="left:547px;top:102px;width:1024px;height:30px;background:#fff"></div>
<svg class="a" style="left:555px;top:108px" width="16" height="17" viewBox="0 0 16 17">
<defs><linearGradient id="appy" x1="0" y1="0" x2="0" y2="1"><stop offset="0" stop-color="#fff27a"/><stop offset="1" stop-color="#ffb820"/></linearGradient></defs>
<path d="M0.6 5.2 L7.6 0.6 L14.6 5.2 V15.4 H0.6 Z" fill="#aef2ff" stroke="#1a7ff0" stroke-width="1.2" stroke-linejoin="round"/>
<path d="M2.2 5.6 L7.6 1.9 L13 5.6 L11 8.8 H4.2 Z" fill="url(#appy)"/>
<path d="M1 5.6 L4.6 9 M14.2 5.6 L10.6 9 M4.4 9 L1.6 15 M10.8 9 L13.6 15 M4.4 9 H10.8" stroke="#1a7ff0" stroke-width="1" fill="none"/>
</svg>
<div class="t" style="left:576.00px;top:111.53px;font-size:11.78px;color:#9a9a9a;font-weight:normal;">Печать адресных этикеток</div>
<div class="a" style="left:1452px;top:116px;width:10px;height:1px;background:#e0e0e0"></div>
<div class="a" style="left:1497px;top:111px;width:10px;height:10px;border:1px solid #8a8a8a"></div>
<svg class="a" style="left:1543px;top:111px" width="11" height="11" viewBox="0 0 11 11"><path d="M0.5 0.5 L10 10 M10 0.5 L0.5 10" stroke="#8a8a8a" stroke-width="1"/></svg>
<div class="a" style="left:547px;top:170px;width:1022px;height:612px;background:#fff;border:1px solid #dadada"></div>
<div class="a" style="left:549px;top:134px;width:119px;height:37px;background:#f0f0f0;border:1px solid #dadada;border-bottom:none"></div>
<div class="a" style="left:667px;top:132px;width:124px;height:39px;background:#fff;border:1px solid #dadada;border-bottom:none"></div>
<svg class="a" style="left:570px;top:139px" width="26" height="26" viewBox="0 0 26 26"><g transform="scale(0.78)">
<path d="M4.8 1.2 L30.8 6.4 L28.3 29.3 L1 23.6 Z" fill="#f2f2f2" stroke="#b8b8bc" stroke-width="0.9"/>
<path d="M4.8 1.2 L12.3 15.9 L1 23.6 Z" fill="#dedede"/>
<path d="M30.8 6.4 L12.3 15.9 L28.3 29.3 Z" fill="#d6d6d6"/>
<path d="M4.8 1.2 L30.8 6.4 L28.3 29.3 L1 23.6 Z" fill="none" stroke="#e85050" stroke-width="1.1" stroke-dasharray="1.4 8.6"/>
<path d="M4.8 1.2 L30.8 6.4 L28.3 29.3 L1 23.6 Z" fill="none" stroke="#4a86e8" stroke-width="1.1" stroke-dasharray="1.4 8.6" stroke-dashoffset="5"/>
<path d="M30.8 6.4 L12.3 15.9" fill="none" stroke="#5a5a5e" stroke-width="1.2"/>
<path d="M28.3 29.3 L30.8 6.4" fill="none" stroke="#6a6a6e" stroke-width="1"/>
</g></svg>
<div class="t" style="left:599.50px;top:148.51px;font-size:10.74px;color:#000;font-weight:normal;">Шаблоны</div>
<svg class="a" style="left:695px;top:138px" width="26" height="26" viewBox="0 0 26 26"><g transform="scale(1.0)">
<defs><linearGradient id="prb" x1="0" y1="0" x2="0" y2="1"><stop offset="0" stop-color="#f6f6f6"/><stop offset="1" stop-color="#b8b8b8"/></linearGradient></defs>
<path d="M2.6 1.1 L11.7 0.8 L13.8 8.4 L5 10.2 Z" fill="#b4e6ff" stroke="#1a8af0" stroke-width="1"/>
<path d="M1 14 C1 9.5 4 8.5 12 8.5 C20 8.5 23.4 9.5 23.4 14 V19 C23.4 22.6 20 23.3 12 23.3 C4 23.3 1 22.6 1 19 Z" fill="url(#prb)" stroke="#a0a0a0" stroke-width="0.9"/>
<ellipse cx="12" cy="12.6" rx="10" ry="3.2" fill="#f8f8f8" stroke="#c8c8c8" stroke-width="0.6"/>
<path d="M2 17.5 C7 20.5 17 20.5 22.5 16.5" stroke="#ffffff" stroke-width="1.3" fill="none"/>
<path d="M11 13.6 H14" stroke="#888" stroke-width="0.8"/>
</g></svg>
<div class="t" style="left:724.40px;top:146.43px;font-size:11.3px;color:#000;font-weight:normal;">Печать</div>
<div class="a" style="left:553px;top:176px;width:645px;height:602px;background:#a09fa4;border-right:1px solid #8a8a8a;border-bottom:1px solid #8a8a8a"></div>
<div class="a" style="left:553px;top:738px;width:644px;height:39px;background:#fff"></div>
<div class="a" style="left:676px;top:176px;width:396px;height:562px;background:#fff"></div>
<svg class="a" style="left:676px;top:176px" width="396" height="562" viewBox="676 176 396 562">
<rect x="682.5" y="181.5" width="383.5" height="546" fill="none" stroke="#f8a6a6" stroke-width="1" stroke-dasharray="3 2.7"/>
<path d="M681.5 176 V182 M681.5 724 V735 M819.5 176 V182 M819.5 724 V735 M957.5 176 V182 M957.5 724 V735 M957.5 181.5 H967 M957.5 724.5 H967 M676 271.5 H682 M957.5 271.5 H967 M676 362.1 H682 M957.5 362.1 H967 M676 452.7 H682 M957.5 452.7 H967 M676 543.3 H682 M957.5 543.3 H967 M676 633.9 H682 M957.5 633.9 H967 M676 181.5 H682 M676 724.5 H682" stroke="#bcbcbc" stroke-width="1" fill="none"/>
</svg>
<div class="t" style="left:695.00px;top:195.43px;font-size:8.0px;color:#1a1a1a;font-weight:bold;transform:scaleX(0.93);transform-origin:0 0">Получатель:</div>
<div class="t" style="left:695.00px;top:214.48px;font-size:6.4px;color:#2a2a2a;font-weight:normal;transform:scaleX(0.723);transform-origin:0 0">КПК &quot;Нахимовский&quot;, Кузьминой Галине Степановне</div>
<div class="t" style="left:695px;top:227.98px;font-size:6.4px;color:#222"><b>299011</b> пр. Нахимова, 5а, оф. 105,</div>
<div class="t" style="left:695px;top:236.53px;font-size:6.4px;color:#222">г. Севастополь</div>
<div class="t" style="left:833.00px;top:195.43px;font-size:8.0px;color:#1a1a1a;font-weight:bold;transform:scaleX(0.93);transform-origin:0 0">Получатель:</div>
<div class="t" style="left:833.00px;top:214.48px;font-size:6.4px;color:#2a2a2a;font-weight:normal;">ООО &quot;Софит&quot;, Какошинскому Роману</div>
<div class="t" style="left:833px;top:227.98px;font-size:6.4px;color:#222"><b>196140</b> Пулковское шоссе, д. 70, г.</div>
<div class="t" style="left:833px;top:236.53px;font-size:6.4px;color:#222">Санкт-Петербург, Ленинградская</div>
<div class="t" style="left:833px;top:245.08px;font-size:6.4px;color:#222">область, Россия</div>
<div class="t" style="left:695.00px;top:285.83px;font-size:8.0px;color:#1a1a1a;font-weight:bold;transform:scaleX(0.93);transform-origin:0 0">Получатель:</div>
<div class="t" style="left:695.00px;top:304.88px;font-size:6.4px;color:#2a2a2a;font-weight:normal;">ООО &quot;Бегет&quot;</div>
<div class="t" style="left:695px;top:318.38px;font-size:6.4px;color:#222"><b>195027</b> а/я 209, г.</div>
<div class="t" style="left:695px;top:326.93px;font-size:6.4px;color:#222">Санкт-Петербург, Ленинградская</div>
<div class="t" style="left:695px;top:335.48px;font-size:6.4px;color:#222">область, Россия</div>
<div class="t" style="left:833.00px;top:285.83px;font-size:8.0px;color:#1a1a1a;font-weight:bold;transform:scaleX(0.93);transform-origin:0 0">Получатель:</div>
<div class="t" style="left:833.00px;top:304.88px;font-size:6.4px;color:#2a2a2a;font-weight:normal;">КПК «Уфимский Фонд Сбережений»,</div>
<div class="t" style="left:833px;top:318.38px;font-size:6.4px;color:#222"><b>450005</b> ул. 50-летия Октября 6/8,</div>
<div class="t" style="left:833px;top:326.93px;font-size:6.4px;color:#222">г. Уфа, Республика Башкортостан</div>
<div class="t" style="left:695.00px;top:376.23px;font-size:8.0px;color:#1a1a1a;font-weight:bold;transform:scaleX(0.93);transform-origin:0 0">Получатель:</div>
<div class="t" style="left:695.00px;top:395.28px;font-size:6.4px;color:#2a2a2a;font-weight:normal;">КПК &quot;Самарский Кредитный Центр&quot;,</div>
<div class="t" style="left:695px;top:408.78px;font-size:6.4px;color:#222"><b>443083</b> ул. Победы, д. 18, кв. 42,</div>
<div class="t" style="left:695px;top:417.33px;font-size:6.4px;color:#222">г. Самара, Самарская область,</div>
<div class="t" style="left:695px;top:425.88px;font-size:6.4px;color:#222">Россия</div>
<div class="t" style="left:833.00px;top:376.23px;font-size:8.0px;color:#1a1a1a;font-weight:bold;transform:scaleX(0.93);transform-origin:0 0">Получатель:</div>
<div class="t" style="left:833.00px;top:395.28px;font-size:6.4px;color:#2a2a2a;font-weight:normal;">ООО  &quot;МАС Альбион&quot;</div>
<div class="t" style="left:833px;top:408.78px;font-size:6.4px;color:#222"><b>664007</b> а/я 323, Иркутск, Иркутская</div>
<div class="t" style="left:833px;top:417.33px;font-size:6.4px;color:#222">область, Россия</div>
<div class="t" style="left:695.00px;top:466.63px;font-size:8.0px;color:#1a1a1a;font-weight:bold;transform:scaleX(0.93);transform-origin:0 0">Получатель:</div>
<div class="t" style="left:695.00px;top:485.68px;font-size:6.4px;color:#2a2a2a;font-weight:normal;">ФКУ «ГБ МСЭ по Амурской области»</div>
<div class="t" style="left:695px;top:499.18px;font-size:6.4px;color:#222"><b>675000</b> ул. Мухина 90,</div>
<div class="t" style="left:695px;top:507.73px;font-size:6.4px;color:#222">Благовещенск, Амурская область</div>
<div class="t" style="left:833.00px;top:466.63px;font-size:8.0px;color:#1a1a1a;font-weight:bold;transform:scaleX(0.93);transform-origin:0 0">Получатель:</div>
<div class="t" style="left:833.00px;top:485.68px;font-size:6.4px;color:#2a2a2a;font-weight:normal;">Руспласт</div>
<div class="t" style="left:833px;top:499.18px;font-size:6.4px;color:#222"><b>665835</b> а/я №7081, Ангарск,</div>
<div class="t" style="left:833px;top:507.73px;font-size:6.4px;color:#222">Иркутская область</div>
<div class="t" style="left:695.00px;top:557.03px;font-size:8.0px;color:#1a1a1a;font-weight:bold;transform:scaleX(0.93);transform-origin:0 0">Получатель:</div>
<div class="t" style="left:695.00px;top:576.08px;font-size:6.4px;color:#2a2a2a;font-weight:normal;">КПК &quot;Самарский Кредитный Центр&quot;,</div>
<div class="t" style="left:695px;top:589.58px;font-size:6.4px;color:#222"><b>443083</b> ул. Победы, д. 18, 3</div>
<div class="t" style="left:695px;top:598.13px;font-size:6.4px;color:#222">крыльцо, г. Самара, Самарская</div>
<div class="t" style="left:695px;top:606.68px;font-size:6.4px;color:#222">область</div>
<div class="t" style="left:833.00px;top:557.03px;font-size:8.0px;color:#1a1a1a;font-weight:bold;transform:scaleX(0.93);transform-origin:0 0">Получатель:</div>
<div class="t" style="left:833.00px;top:576.08px;font-size:6.4px;color:#2a2a2a;font-weight:normal;">ООО «1С-Битрикс»</div>
<div class="t" style="left:833px;top:589.58px;font-size:6.4px;color:#222"><b>236022</b> а/я 126, Калининград,</div>
<div class="t" style="left:833px;top:598.13px;font-size:6.4px;color:#222">Калининградская область</div>
<div class="t" style="left:695.00px;top:647.43px;font-size:8.0px;color:#1a1a1a;font-weight:bold;transform:scaleX(0.93);transform-origin:0 0">Получатель:</div>
<div class="t" style="left:695.00px;top:666.48px;font-size:6.4px;color:#2a2a2a;font-weight:normal;">Руспласт</div>
<div class="t" style="left:695px;top:679.98px;font-size:6.4px;color:#222"><b>115127</b> Варшавское шоссе, д. 37,</div>
<div class="t" style="left:695px;top:688.53px;font-size:6.4px;color:#222">а/я 103, Москва</div>
<div class="t" style="left:833.00px;top:647.43px;font-size:8.0px;color:#1a1a1a;font-weight:bold;transform:scaleX(0.93);transform-origin:0 0">Получатель:</div>
<div class="t" style="left:833.00px;top:666.48px;font-size:6.4px;color:#2a2a2a;font-weight:normal;">ООО &quot;ОБК&quot;, С.П. Байсангуров</div>
<div class="t" style="left:833px;top:679.98px;font-size:6.4px;color:#222"><b>236005</b> Камская д. 62, Калининград,</div>
<div class="t" style="left:833px;top:688.53px;font-size:6.4px;color:#222">Калининградская область</div>
<div class="a" style="left:596px;top:746px;width:31px;height:23px;background:#fff;border:1px solid #7a7a7a"></div>
<div class="t" style="left:606.50px;top:749.66px;font-size:16px;color:#000;font-weight:normal;">1</div>
<div class="t" style="left:632.80px;top:750.08px;font-size:15.5px;color:#000;font-weight:normal;">из 1</div>
<div class="a" style="left:719px;top:751px;width:13px;height:13px;border:1px solid #333;background:#fff"></div>
<svg class="a" style="left:720px;top:752px" width="11" height="11" viewBox="0 0 11 11"><path d="M1.5 5.2 L4.3 8.3 L9.5 2.5" fill="none" stroke="#333" stroke-width="1.1"/></svg>
<div class="t" style="left:735.40px;top:751.77px;font-size:12.79px;color:#000;font-weight:normal;">Показывать границы печати</div>
<div class="t" style="left:993.50px;top:749.95px;font-size:14.94px;color:#7d0000;font-weight:bold;">Шаблон:</div>
<div class="t" style="left:1070.70px;top:750.03px;font-size:14.85px;color:#7d0000;font-weight:bold;">DL To</div>
<div class="t" style="left:1123.00px;top:752.85px;font-size:11.52px;color:#0000ff;font-weight:bold;text-decoration:underline">Изменить...</div>
<div class="a" style="left:1203px;top:178px;width:319px;height:36px;background:#fff;border:1px solid #7a7a7a"></div>
<svg class="a" style="left:1209px;top:184px" width="24" height="24" viewBox="0 0 24 24"><g transform="scale(0.95)">
<defs><linearGradient id="prb" x1="0" y1="0" x2="0" y2="1"><stop offset="0" stop-color="#f6f6f6"/><stop offset="1" stop-color="#b8b8b8"/></linearGradient></defs>
<path d="M2.6 1.1 L11.7 0.8 L13.8 8.4 L5 10.2 Z" fill="#b4e6ff" stroke="#1a8af0" stroke-width="1"/>
<path d="M1 14 C1 9.5 4 8.5 12 8.5 C20 8.5 23.4 9.5 23.4 14 V19 C23.4 22.6 20 23.3 12 23.3 C4 23.3 1 22.6 1 19 Z" fill="url(#prb)" stroke="#a0a0a0" stroke-width="0.9"/>
<ellipse cx="12" cy="12.6" rx="10" ry="3.2" fill="#f8f8f8" stroke="#c8c8c8" stroke-width="0.6"/>
<path d="M2 17.5 C7 20.5 17 20.5 22.5 16.5" stroke="#ffffff" stroke-width="1.3" fill="none"/>
<path d="M11 13.6 H14" stroke="#888" stroke-width="0.8"/>
</g></svg>
<div class="t" style="left:1236.50px;top:194.05px;font-size:12.46px;color:#000;font-weight:normal;">Canon MG2100 series Printer</div>
<svg class="a" style="left:1507.5px;top:194.5px" width="9" height="6" viewBox="0 0 9 6"><path d="M0.5 0.5 L4.5 4.5 L8.5 0.5" fill="none" stroke="#505050" stroke-width="1"/></svg>
<div class="a" style="left:1529px;top:179px;width:34px;height:34px;background:#e1e1e1;border:1px solid #adadad"></div>
<svg class="a" style="left:1534px;top:184px" width="24" height="24" viewBox="0 0 24 24">
<defs><radialGradient id="gearg" cx="0.5" cy="0.5" r="0.5"><stop offset="0.3" stop-color="#e8f8ff"/><stop offset="1" stop-color="#8cc6f4"/></radialGradient></defs>
<polygon points="8.91,5.06 9.73,1.34 14.27,1.34 15.09,5.06 14.72,4.90 17.94,2.86 21.14,6.06 19.10,9.28 18.94,8.91 22.66,9.73 22.66,14.27 18.94,15.09 19.10,14.72 21.14,17.94 17.94,21.14 14.72,19.10 15.09,18.94 14.27,22.66 9.73,22.66 8.91,18.94 9.28,19.10 6.06,21.14 2.86,17.94 4.90,14.72 5.06,15.09 1.34,14.27 1.34,9.73 5.06,8.91 4.90,9.28 2.86,6.06 6.06,2.86 9.28,4.90" fill="url(#gearg)" stroke="#3a92e4" stroke-width="1.1" stroke-linejoin="round"/>
<circle cx="12" cy="12" r="3.8" fill="#e1e1e1" stroke="#3a92e4" stroke-width="1.1"/>
</svg>
<div class="a" style="left:1200px;top:225px;width:366px;height:103px;border:1px solid #dcdcdc"></div>
<div class="a" style="left:1206px;top:220px;width:44px;height:14px;background:#fff"></div>
<div class="t" style="left:1208.60px;top:219.93px;font-size:12.25px;color:#000;font-weight:normal;">Бумага</div>
<div class="a" style="left:1200px;top:338px;width:366px;height:139px;border:1px solid #dcdcdc"></div>
<div class="a" style="left:1206px;top:332px;width:30px;height:14px;background:#fff"></div>
<div class="t" style="left:1208.60px;top:332.59px;font-size:11.35px;color:#000;font-weight:normal;">Поля</div>
<div class="t" style="left:1213.40px;top:244.46px;font-size:12.69px;color:#000;font-weight:normal;">Формат бумаги:</div>
<div class="a" style="left:1339px;top:238px;width:216px;height:24px;background:#e5e5e5;border:1px solid #adadad"></div>
<div class="t" style="left:1343.00px;top:244.39px;font-size:12.77px;color:#000;font-weight:normal;">A4 - 210 x 297 мм</div>
<svg class="a" style="left:1541.5px;top:247.5px" width="9" height="6" viewBox="0 0 9 6"><path d="M0.5 0.5 L4.5 4.5 L8.5 0.5" fill="none" stroke="#505050" stroke-width="1"/></svg>
<div class="t" style="left:1213.40px;top:274.61px;font-size:12.63px;color:#000;font-weight:normal;">Ориентация:</div>
<div class="a" style="left:1338px;top:273px;width:13px;height:13px;border:1px solid #333;border-radius:50%;background:#fff"><div class="a" style="left:2px;top:2px;width:7px;height:7px;border-radius:50%;background:#222"></div></div>
<div class="t" style="left:1354.00px;top:275.26px;font-size:12.81px;color:#000;font-weight:normal;">Книжная</div>
<div class="a" style="left:1415px;top:273px;width:13px;height:13px;border:1px solid #333;border-radius:50%;background:#fff"></div>
<div class="t" style="left:1431.00px;top:275.70px;font-size:12.28px;color:#000;font-weight:normal;">Альбомная</div>
<div class="t" style="left:1213.40px;top:304.41px;font-size:12.63px;color:#000;font-weight:normal;">Число копий:</div>
<div class="a" style="left:1338px;top:298px;width:41px;height:24px;background:#fff;border:1px solid #7a7a7a"></div>
<div class="t" style="left:1341.50px;top:304.73px;font-size:12.6px;color:#000;font-weight:normal;">1</div>
<div class="a" style="left:1380px;top:298px;width:15px;height:11px;background:#e8e8e8;border:1px solid #c8c8c8"></div>
<div class="a" style="left:1380px;top:310px;width:15px;height:11px;background:#e8e8e8;border:1px solid #c8c8c8"></div>
<svg class="a" style="left:1384px;top:301px" width="7" height="5" viewBox="0 0 7 5"><path d="M0 4 L3.5 0.5 L7 4 Z" fill="#333"/></svg>
<svg class="a" style="left:1384px;top:313px" width="7" height="5" viewBox="0 0 7 5"><path d="M0 0.5 L3.5 4 L7 0.5 Z" fill="#333"/></svg>
<div class="t" style="left:1404.20px;top:304.26px;font-size:12.81px;color:#000;font-weight:normal;">Качество:</div>
<div class="a" style="left:1475px;top:298px;width:81px;height:24px;background:#e5e5e5;border:1px solid #adadad"></div>
<div class="t" style="left:1479.50px;top:304.70px;font-size:12.29px;color:#000;font-weight:normal;">300 DPI</div>
<svg class="a" style="left:1542.5px;top:307.5px" width="9" height="6" viewBox="0 0 9 6"><path d="M0.5 0.5 L4.5 4.5 L8.5 0.5" fill="none" stroke="#505050" stroke-width="1"/></svg>
<div class="t" style="left:1213.40px;top:356.11px;font-size:13.1px;color:#000;font-weight:normal;">Слева и справа:</div>
<div class="a" style="left:1339px;top:350.0px;width:41px;height:24px;background:#fff;border:1px solid #7a7a7a"></div>
<div class="t" style="left:1342.50px;top:356.73px;font-size:12.6px;color:#000;font-weight:normal;">3</div>
<div class="a" style="left:1381px;top:350.0px;width:15px;height:11px;background:#e8e8e8;border:1px solid #c8c8c8"></div>
<div class="a" style="left:1381px;top:362.0px;width:15px;height:11px;background:#e8e8e8;border:1px solid #c8c8c8"></div>
<svg class="a" style="left:1385px;top:353.0px" width="7" height="5" viewBox="0 0 7 5"><path d="M0 4 L3.5 0.5 L7 4 Z" fill="#333"/></svg>
<svg class="a" style="left:1385px;top:365.0px" width="7" height="5" viewBox="0 0 7 5"><path d="M0 0.5 L3.5 4 L7 0.5 Z" fill="#333"/></svg>
<div class="t" style="left:1402.00px;top:357.35px;font-size:11.64px;color:#000;font-weight:normal;">мм</div>
<div class="t" style="left:1213.40px;top:386.04px;font-size:13.3px;color:#000;font-weight:normal;">Сверху и снизу:</div>
<div class="a" style="left:1339px;top:380.1px;width:41px;height:24px;background:#fff;border:1px solid #7a7a7a"></div>
<div class="t" style="left:1342.50px;top:386.83px;font-size:12.6px;color:#000;font-weight:normal;">3</div>
<div class="a" style="left:1381px;top:380.1px;width:15px;height:11px;background:#e8e8e8;border:1px solid #c8c8c8"></div>
<div class="a" style="left:1381px;top:392.1px;width:15px;height:11px;background:#e8e8e8;border:1px solid #c8c8c8"></div>
<svg class="a" style="left:1385px;top:383.1px" width="7" height="5" viewBox="0 0 7 5"><path d="M0 4 L3.5 0.5 L7 4 Z" fill="#333"/></svg>
<svg class="a" style="left:1385px;top:395.1px" width="7" height="5" viewBox="0 0 7 5"><path d="M0 0.5 L3.5 4 L7 0.5 Z" fill="#333"/></svg>
<div class="t" style="left:1402.00px;top:387.45px;font-size:11.64px;color:#000;font-weight:normal;">мм</div>
<div class="t" style="left:1213.40px;top:417.13px;font-size:12.61px;color:#000;font-weight:normal;">Выпуск под обрез:</div>
<div class="a" style="left:1339px;top:410.6px;width:41px;height:24px;background:#fff;border:1px solid #7a7a7a"></div>
<div class="t" style="left:1342.50px;top:417.33px;font-size:12.6px;color:#000;font-weight:normal;">5</div>
<div class="a" style="left:1381px;top:410.6px;width:15px;height:11px;background:#e8e8e8;border:1px solid #c8c8c8"></div>
<div class="a" style="left:1381px;top:422.6px;width:15px;height:11px;background:#e8e8e8;border:1px solid #c8c8c8"></div>
<svg class="a" style="left:1385px;top:413.6px" width="7" height="5" viewBox="0 0 7 5"><path d="M0 4 L3.5 0.5 L7 4 Z" fill="#333"/></svg>
<svg class="a" style="left:1385px;top:425.6px" width="7" height="5" viewBox="0 0 7 5"><path d="M0 0.5 L3.5 4 L7 0.5 Z" fill="#333"/></svg>
<div class="t" style="left:1402.00px;top:417.95px;font-size:11.64px;color:#000;font-weight:normal;">мм</div>
<div class="t" style="left:1213.40px;top:450.08px;font-size:12.66px;color:#000;font-weight:normal;">Маркеры обреза:</div>
<div class="a" style="left:1339px;top:443px;width:208px;height:24px;background:#e5e5e5;border:1px solid #adadad"></div>
<div class="t" style="left:1343.00px;top:450.40px;font-size:12.29px;color:#000;font-weight:normal;">Обычные</div>
<svg class="a" style="left:1532.5px;top:452.5px" width="9" height="6" viewBox="0 0 9 6"><path d="M0.5 0.5 L4.5 4.5 L8.5 0.5" fill="none" stroke="#505050" stroke-width="1"/></svg>
<div class="a" style="left:1203px;top:490px;width:360px;height:46px;border:1px solid #dcdcdc"></div>
<div class="a" style="left:1209px;top:484px;width:138px;height:14px;background:#fff"></div>
<div class="t" style="left:1211.40px;top:484.36px;font-size:12.8px;color:#000;font-weight:normal;">Выбрать отправителя:</div>
<div class="a" style="left:1213px;top:504px;width:340px;height:23px;background:#e5e5e5;border:1px solid #adadad"></div>
<div class="t" style="left:1217.10px;top:509.79px;font-size:12.53px;color:#000;font-weight:normal;">Студия NEFT.digital, Баля А.Е.</div>
<svg class="a" style="left:1537.5px;top:512.5px" width="9" height="6" viewBox="0 0 9 6"><path d="M0.5 0.5 L4.5 4.5 L8.5 0.5" fill="none" stroke="#505050" stroke-width="1"/></svg>
<div class="a" style="left:1203px;top:552px;width:360px;height:153px;border:1px solid #dcdcdc"></div>
<div class="a" style="left:1209px;top:546px;width:199px;height:14px;background:#fff"></div>
<div class="t" style="left:1211.40px;top:545.55px;font-size:12.7px;color:#000;font-weight:normal;">Список получателей в рассылке:</div>
<div class="a" style="left:1213px;top:564px;width:340px;height:133px;background:#fff;border:1px solid #7a7a7a"></div>
<div class="a" style="left:1215px;top:568px;width:319px;height:14px;background:#0078d7"></div>
<div class="clip" style="left:1214px;top:565px;width:321px;height:131px">
<div class="t" style="left:3.00px;top:3.68px;font-size:12.55px;color:#fff;font-weight:normal;">КПК &quot;Нахимовский&quot;, Кузьминой Галине Степановне</div>
<div class="t" style="left:3.00px;top:19.68px;font-size:12.55px;color:#000;font-weight:normal;">ООО &quot;Софит&quot;, Какошинскому Роману</div>
<div class="t" style="left:3.00px;top:35.68px;font-size:12.55px;color:#000;font-weight:normal;">ООО &quot;Бегет&quot;</div>
<div class="t" style="left:3.00px;top:51.68px;font-size:12.55px;color:#000;font-weight:normal;">КПК «Уфимский Фонд Сбережений», Эмилии Зульфатовне</div>
<div class="t" style="left:3.00px;top:67.68px;font-size:12.55px;color:#000;font-weight:normal;">КПК &quot;Самарский Кредитный Центр&quot;, Ушакову М.С.</div>
<div class="t" style="left:3.00px;top:83.68px;font-size:12.55px;color:#000;font-weight:normal;">ООО  &quot;МАС Альбион&quot;</div>
<div class="t" style="left:3.00px;top:99.68px;font-size:12.55px;color:#000;font-weight:normal;">ФКУ «ГБ МСЭ по Амурской области» Минтруда России</div>
<div class="t" style="left:3.00px;top:115.68px;font-size:12.55px;color:#000;font-weight:normal;">Руспласт</div>
</div>
<div class="a" style="left:1535px;top:565px;width:17px;height:131px;background:#f0f0f0"></div>
<div class="a" style="left:1536px;top:583px;width:15px;height:62px;background:#cdcdcd"></div>
<svg class="a" style="left:1539px;top:571px" width="9" height="6" viewBox="0 0 9 6"><path d="M0.5 5 L4.5 1 L8.5 5" fill="none" stroke="#606060" stroke-width="1.4"/></svg>
<svg class="a" style="left:1539px;top:683px" width="9" height="6" viewBox="0 0 9 6"><path d="M0.5 1 L4.5 5 L8.5 1" fill="none" stroke="#606060" stroke-width="1.4"/></svg>
<div class="a" style="left:1203px;top:721px;width:360px;height:53px;border:1px solid #dcdcdc"></div>
<div class="a" style="left:1209px;top:715px;width:151px;height:14px;background:#fff"></div>
<div class="t" style="left:1211.40px;top:715.53px;font-size:12.72px;color:#000;font-weight:normal;">Порядок вывода адреса:</div>
<div class="a" style="left:1213px;top:736px;width:13px;height:13px;border:1px solid #333;border-radius:50%;background:#fff"><div class="a" style="left:2px;top:2px;width:7px;height:7px;border-radius:50%;background:#222"></div></div>
<div class="t" style="left:1229.10px;top:736.71px;font-size:12.86px;color:#000;font-weight:normal;">Новый   (улица, город, область, страна)</div>
<div class="a" style="left:1213px;top:756px;width:13px;height:13px;border:1px solid #333;border-radius:50%;background:#fff"></div>
<div class="t" style="left:1229.10px;top:756.65px;font-size:12.82px;color:#000;font-weight:normal;">Старый (страна, область, город, улица)</div>
<div class="a" style="left:1199px;top:778px;width:368px;height:1px;background:#a0a0a0"></div>
<div class="a" style="left:1566px;top:174px;width:1px;height:605px;background:#a0a0a0"></div>
<div class="a" style="left:559px;top:791px;width:148px;height:33px;background:#e1e1e1;border:2px solid #0078d7"></div>
<svg class="a" style="left:570px;top:795px" width="21" height="25" viewBox="0 0 21 25">
<path d="M0.5 0.5 H13 L19.5 6.5 V23.5 H0.5 Z" fill="#f8f8f8" stroke="#c4c4c4" stroke-width="0.9"/>
<path d="M13 0.5 L19.5 6.5" stroke="#8c8c8c" stroke-width="1.2"/>
<path d="M0.5 18.8 H19.5 V23.5 H0.5 Z" fill="#e00a0a"/>
<path d="M9.3 2.5 C7.8 3 8.2 6 9.5 8.8 C10.5 11 12.5 12.6 14.8 13.6 C13.6 14.8 12 12.6 10 12.6 C8 12.8 6 14.8 3.2 17.2" fill="none" stroke="#ea1818" stroke-width="1.5" stroke-linecap="round"/>
<path d="M9.3 2.5 C10.6 3 10.4 6 9.6 8.8 C9 11 8 13 6 15.5" fill="none" stroke="#ea1818" stroke-width="1.3"/>
</svg>
<div class="t" style="left:598.60px;top:802.56px;font-size:12.21px;color:#000;font-weight:normal;">Сохранить в PDF</div>
<div class="a" style="left:719px;top:791px;width:148px;height:33px;background:#e1e1e1;border:1px solid #adadad"></div>
<div class="t" style="left:745.00px;top:802.12px;font-size:12.74px;color:#000;font-weight:normal;">Сохранить как...</div>
<div class="a" style="left:1325px;top:791px;width:111px;height:33px;background:#e1e1e1;border:1px solid #adadad"></div>
<div class="t" style="left:1357.50px;top:802.20px;font-size:13px;color:#000;font-weight:bold;letter-spacing:0.35px">Печать</div>
<div class="a" style="left:1448px;top:791px;width:111px;height:33px;background:#e1e1e1;border:1px solid #adadad"></div>
<div class="t" style="left:1482.00px;top:802.56px;font-size:12.21px;color:#000;font-weight:normal;">Отмена</div>
</body></html>
